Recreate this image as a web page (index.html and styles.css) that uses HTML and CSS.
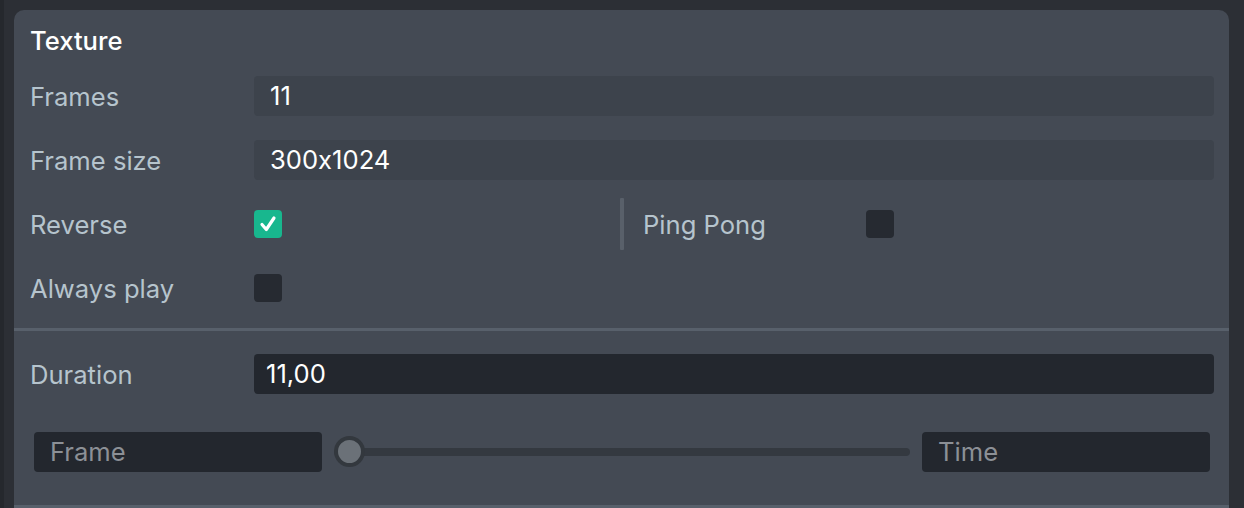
FILE: index.html
```html
<!DOCTYPE html>
<html lang="en">
<head>
<meta charset="utf-8">
<title>Texture</title>
<link rel="stylesheet" href="styles.css">
</head>
<body>
<div class="app">
  <div class="panel">
    <section class="section section-texture">
      <h2 class="title">Texture</h2>
      <div class="row">
        <span class="label">Frames</span>
        <div class="field field-soft">11</div>
      </div>
      <div class="row">
        <span class="label">Frame size</span>
        <div class="field field-soft">300x1024</div>
      </div>
      <div class="row">
        <span class="label">Reverse</span>
        <div class="value-split">
          <div class="half">
            <span class="checkbox checked">
              <svg viewBox="0 0 28 28" width="28" height="28"><path d="M8 14.5 L12.3 19.5 L20 8" fill="none" stroke="#fff" stroke-width="3.2" stroke-linecap="round" stroke-linejoin="round"/></svg>
            </span>
          </div>
          <div class="half half-right">
            <span class="divider"></span>
            <span class="label label-inline">Ping Pong</span>
            <span class="checkbox"></span>
          </div>
        </div>
      </div>
      <div class="row">
        <span class="label">Always play</span>
        <span class="checkbox"></span>
      </div>
    </section>
    <div class="separator"></div>
    <section class="section section-duration">
      <div class="row">
        <span class="label">Duration</span>
        <div class="field field-dark field-tight">11,00</div>
      </div>
      <div class="scrub-row">
        <div class="box placeholder">Frame</div>
        <div class="slider">
          <div class="track"></div>
          <div class="thumb"></div>
        </div>
        <div class="box placeholder">Time</div>
      </div>
    </section>
    <div class="separator"></div>
  </div>
</div>
</body>
</html>
```
FILE: styles.css
```css
* { box-sizing: border-box; }

html, body {
  margin: 0;
  padding: 0;
  height: 100%;
  background: #2c2f35;
  overflow: hidden;
}

body {
  border-left: 4px solid #25282d;
  font-family: "Inter", "Noto Sans", sans-serif;
  font-size: 25.6px;
  line-height: 30px;
  font-feature-settings: "calt" 0;
}

.app {
  padding: 10px 15px 0 10px;
  height: 100%;
}

.panel {
  background: #444a54;
  border-radius: 10px 10px 0 0;
  height: 100%;
}

.section-texture {
  padding: 16px 15px 20px 16px;
}

.title {
  margin: 0 0 20px 0;
  font-size: 25.6px;
  line-height: 30px;
  font-weight: 500;
  color: #ffffff;
}

.row {
  display: grid;
  grid-template-columns: 224px 1fr;
  align-items: center;
  height: 40px;
  margin-bottom: 24px;
}

.row:last-child { margin-bottom: 0; }

.label {
  color: #b6c4cd;
  height: 40px;
  line-height: 40px;
  padding-top: 1px;
  white-space: nowrap;
}

.field {
  height: 40px;
  line-height: 38px;
  border-radius: 4px;
  color: #ffffff;
  padding-left: 16px;
  padding-top: 1px;
}

.field-soft { background: #3d434c; }
.field-dark { background: #23272e; }
.field-tight { padding-left: 12px; }

.value-split {
  display: grid;
  grid-template-columns: 366px 1fr;
  align-items: center;
  height: 40px;
}

.half {
  display: flex;
  align-items: center;
}

.half-right { height: 40px; }

.divider {
  width: 4px;
  height: 52px;
  margin: -6px 0;
  background: #59606a;
  border-radius: 1px;
}

.label-inline {
  margin-left: 19px;
  width: 223px;
}

.checkbox {
  width: 28px;
  height: 28px;
  border-radius: 4px;
  background: #262a31;
  display: block;
}

.checkbox svg { display: block; }

.checkbox.checked { background: #18b78e; }

.separator {
  height: 3px;
  background: #58606b;
}

.section-duration {
  padding: 23px 15px 33px 16px;
}

.section-duration .row { margin-bottom: 38px; }

.scrub-row {
  display: grid;
  grid-template-columns: 288px 1fr 288px;
  column-gap: 12px;
  align-items: center;
  margin: 0 4px 0 4px;
  height: 40px;
}

.box {
  height: 40px;
  line-height: 38px;
  border-radius: 4px;
  background: #23272e;
  padding-left: 16px;
  padding-top: 1px;
}

.placeholder { color: #8c9096; }

.slider {
  position: relative;
  height: 40px;
  display: flex;
  align-items: center;
}

.track {
  flex: 1;
  height: 8px;
  border-radius: 4px;
  background: #343940;
}

.thumb {
  position: absolute;
  left: 0;
  top: 4px;
  width: 31px;
  height: 31px;
  border-radius: 50%;
  background: #6b7178;
  border: 4px solid #33383e;
}
```
